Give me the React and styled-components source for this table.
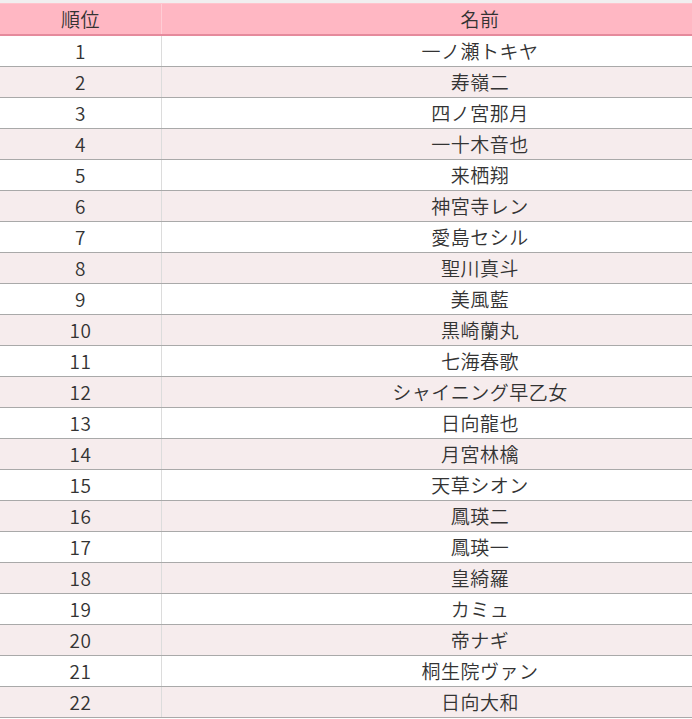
import styled, { createGlobalStyle } from "styled-components";

const names = [
  "一ノ瀬トキヤ", "寿嶺二", "四ノ宮那月", "一十木音也", "来栖翔", "神宮寺レン",
  "愛島セシル", "聖川真斗", "美風藍", "黒崎蘭丸", "七海春歌", "シャイニング早乙女",
  "日向龍也", "月宮林檎", "天草シオン", "鳳瑛二", "鳳瑛一", "皇綺羅", "カミュ",
  "帝ナギ", "桐生院ヴァン", "日向大和",
];

const GlobalStyle = createGlobalStyle`
  html, body {
    margin: 0;
    padding: 0;
    background: #fff;
  }
  body {
    font-family: "Noto Sans CJK JP", "Noto Sans", sans-serif;
    color: #333;
  }
`;

// the table is wider than the window, so it is clipped on the right
const Frame = styled.div`
  width: 100%;
  overflow: hidden;
`;

const Wrap = styled.div`
  width: 798px;
  border-top: 3px solid #f1eff0;
`;

const Row = styled.div`
  display: grid;
  grid-template-columns: 162px 1fr;
  height: 30px;
  background: ${(p) => (p.head ? "#ffb7c3" : p.alt ? "#f6eced" : "#fff")};
  border-top: ${(p) => (p.head ? "1px solid #ffc4cd" : "none")};
  border-bottom: ${(p) => (p.head ? "2px solid #e58a9c" : "1px solid #a9a9a9")};
`;

const Cell = styled.div`
  display: flex;
  align-items: center;
  justify-content: center;
  font-size: 19px;
  font-weight: 350;
  line-height: 1;
  letter-spacing: 0.5px;
  padding-bottom: 2px;
  border-right: ${(p) => (p.first ? `1px solid ${p.head ? "#ffcdd5" : "#dcdcdc"}` : "none")};
`;

export default function App() {
  return (
    <>
      <GlobalStyle />
      <Frame>
        <Wrap>
          <Row head>
            <Cell first head>順位</Cell>
            <Cell head>名前</Cell>
          </Row>
          {names.map((n, i) => (
            <Row key={n} alt={i % 2 === 1}>
              <Cell first>{i + 1}</Cell>
              <Cell>{n}</Cell>
            </Row>
          ))}
        </Wrap>
      </Frame>
    </>
  );
}
